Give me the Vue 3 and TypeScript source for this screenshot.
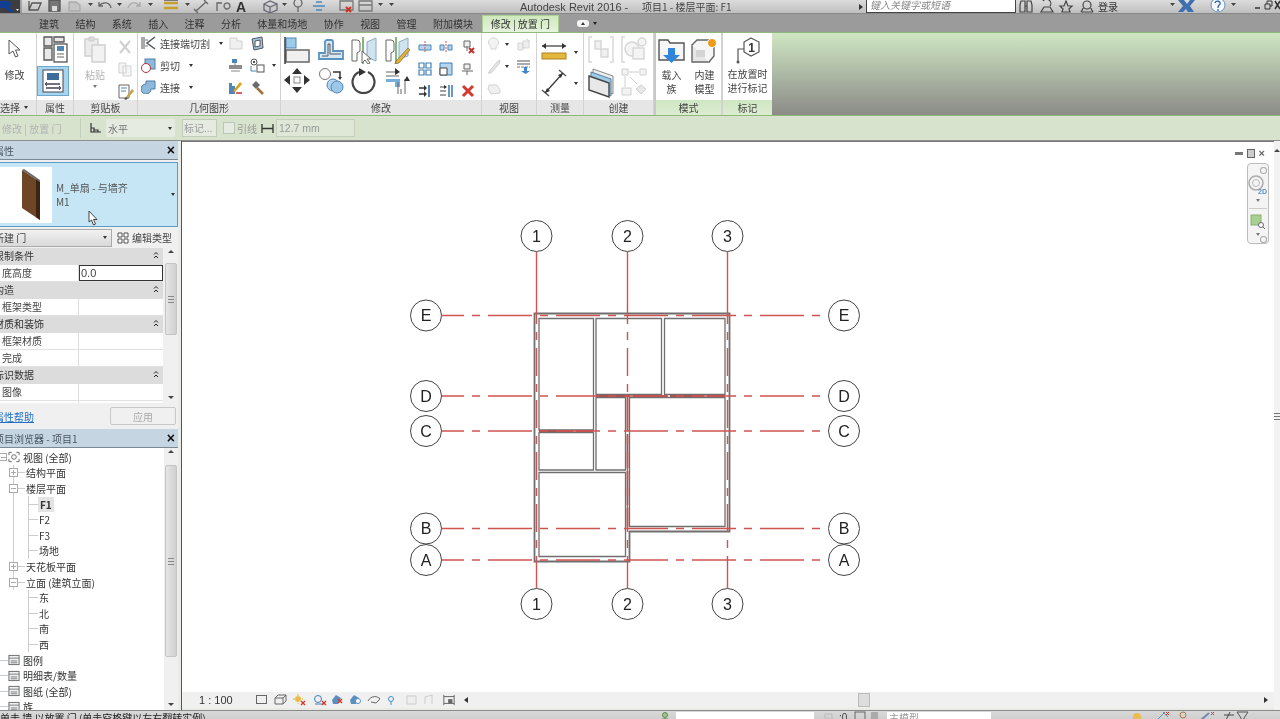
<script setup lang="ts">
// Revit 2016 main window, floor plan F1 with the "place door" contextual tab open
interface TreeRow {
  text: string
  depth: 0 | 1 | 2
  exp?: '+' | '-'
  guide?: string
  selected?: boolean
}

const tabs = ['建筑', '结构', '系统', '插入', '注释', '分析', '体量和场地', '协作', '视图', '管理', '附加模块']

const propRows = [
  { label: '限制条件', head: true },
  { label: '底高度', value: '0.0' },
  { label: '构造', head: true },
  { label: '框架类型' },
  { label: '材质和装饰', head: true },
  { label: '框架材质' },
  { label: '完成' },
  { label: '标识数据', head: true },
  { label: '图像' },
  { label: '' },
]

const tree: TreeRow[] = [
  { text: '视图 (全部)', depth: 0, exp: '-' },
  { text: '结构平面', depth: 1, exp: '+', guide: 'g1' },
  { text: '楼层平面', depth: 1, exp: '-', guide: 'g1' },
  { text: 'F1', depth: 2, guide: 'g1 g2', selected: true },
  { text: 'F2', depth: 2, guide: 'g1 g2' },
  { text: 'F3', depth: 2, guide: 'g1 g2' },
  { text: '场地', depth: 2, guide: 'g1 g2' },
  { text: '天花板平面', depth: 1, exp: '+', guide: 'g1' },
  { text: '立面 (建筑立面)', depth: 1, exp: '-', guide: 'g1' },
  { text: '东', depth: 2, guide: 'g2' },
  { text: '北', depth: 2, guide: 'g2' },
  { text: '南', depth: 2, guide: 'g2' },
  { text: '西', depth: 2, guide: 'g2' },
  { text: '图例', depth: 0 },
  { text: '明细表/数量', depth: 0 },
  { text: '图纸 (全部)', depth: 0 },
  { text: '族', depth: 0 },
]

const gridV = [
  { x: 536.5, label: '1' },
  { x: 627.5, label: '2' },
  { x: 727.5, label: '3' },
]
const gridH = [
  { y: 315.5, label: 'E' },
  { y: 396, label: 'D' },
  { y: 431, label: 'C' },
  { y: 528.5, label: 'B' },
  { y: 560, label: 'A' },
]
const rooms = [
  '539,318.5 593.5,318.5 593.5,430 539,430',
  '539,432.5 593.5,432.5 593.5,470 539,470',
  '596,318.5 661.5,318.5 661.5,394.5 596,394.5',
  '664.5,318.5 725,318.5 725,394.5 664.5,394.5',
  '596,397.5 625.5,397.5 625.5,470 596,470',
  '629.5,397.5 725,397.5 725,526.5 629.5,526.5',
  '539,472.5 625.5,472.5 625.5,526.5 625.5,556.5 539,556.5',
]
</script>

<template>
  <div class="app">
    <!-- title bar -->
    <header class="titlebar">
      <svg class="qat" width="400" height="13" viewBox="0 0 400 13">
        <rect x="0" y="0" width="20" height="13" fill="#3d3d3f" />
        <path d="M0 1H9L12 4 9 7 14 12H9L5 8H0Z" fill="#123f94" />
        <path d="M16 9l3 0-1.500 2z" fill="#eee" />
        <path d="M21 0V13" stroke="#777" />
        <g fill="none" stroke="#555" stroke-width="1.300">
          <path d="M29 1V10H38L41 3H32L29 10" />
          <path d="M49 0H60V11H49Z" fill="#777" />
          <path d="M52 6H57V11H52Z" fill="#ddd" stroke="none" />
          <path d="M69 2H76L80 5V11H69Z" fill="#c4c4c4" stroke="#aaa" />
          <path d="M99 6C103 1 110 2 111 8M99 2V6H103" stroke="#666" />
          <path d="M140 6C136 1 130 2 128 8M140 2V6H136" stroke="#aaa" />
          <path d="M164 3H178M164 8H178" stroke="#c89e2c" stroke-width="2.500" />
          <path d="M164 0H178" stroke="#444" />
          <path d="M196 11L206 2M194 9l4 4M204 0l4 4" stroke="#666" />
          <path d="M217 11L217 3H222M224 6A3 3 0 1 0 224 5.900" stroke="#666" />
          <path d="M264 4L270 1L277 4V10L270 13L264 10ZM264 4L270 7L277 4M270 7V13" stroke="#667" />
          <path d="M294 3A4 4 0 1 0 302 3A4 4 0 1 0 294 3M298 7V12" stroke="#666" />
          <path d="M313 6H325M316 2H322M316 10H322" stroke="#4b87b8" />
          <path d="M340 1H353V10H340Z" stroke="#777" />
          <path d="M359 1H372V11H359ZM359 5H372" stroke="#777" />
        </g>
        <path d="M346 7l5 5M351 7l-5 5" stroke="#d03020" stroke-width="2" />
        <g fill="#444">
          <path d="M88 3h5l-2.500 3zM117 3h5l-2.500 3zM148 3h5l-2.500 3zM185 3h5l-2.500 3zM282 3h5l-2.500 3zM378 3h5l-2.500 3zM389 3h5l-2.500 3z" />
        </g>
        <text x="236" y="12" class="qat-a">A</text>
      </svg>
      <span class="title-text">Autodesk Revit 2016 -</span>
      <span class="title-doc">项目1 - 楼层平面: F1</span>
      <i class="tri-r"></i>
      <div class="search">键入关键字或短语</div>
      <svg class="title-tools" width="245" height="13" viewBox="0 0 245 13">
        <g fill="none" stroke="#444" stroke-width="1.200">
          <path d="M4 1H8V12H3V5ZM10 1H14L15 5V12H10ZM8 6H10" />
          <path d="M26 1A4 4 0 0 1 33 6M24 12H36L33 7H27Z" />
          <path d="M49 1L51 6H55L52 9L53 12H45L46 9L43 6H47Z" />
          <path d="M66 5A4 4 0 1 0 74 5A4 4 0 1 0 66 5M64 12C66 9 66 9 66 8M76 12C74 9 74 9 74 8M64 12H76" />
        </g>
        <path d="M161 0H167L170 4L173 0H178L173 6L177 12H171L169 9L166 12H161L166 6Z" fill="#3f6fae" />
        <circle cx="201" cy="5" r="7" fill="#f4f8fc" stroke="#6c8fbb" />
        <path d="M198 3C199 0 204 1 203 4C202 6 201 5 201 8M201 9V11" fill="none" stroke="#2e5fa8" stroke-width="1.300" />
        <path d="M153 3h5l-2.500 3zM214 3h5l-2.500 3z" fill="#444" />
        <path d="M238 8H243" stroke="#333" stroke-width="1.500" />
      </svg>
      <span class="login">登录</span>
      <svg class="win-btns" width="18" height="13" viewBox="0 0 18 13">
        <path d="M3 4H8V9H3ZM5 4V1H10V6H8" fill="none" stroke="#333" />
        <path d="M13 1L18 9M18 1L13 9" stroke="#333" stroke-width="1.500" />
      </svg>
    </header>

    <!-- ribbon tabs -->
    <nav class="tabbar">
      <span v-for="t in tabs" :key="t" class="tab">{{ t }}</span>
      <span class="tab-active">修改 | 放置 门</span>
      <span class="tab-pill"><i></i></span>
      <i class="caret tab-caret"></i>
    </nav>

    <!-- ribbon -->
    <section class="ribbon">
      <div class="panel p-select">
        <div class="panel-body stack">
          <svg width="16" height="20" viewBox="0 0 16 20">
            <path d="M2 1V15L6 12L8.500 18L11 17L8.500 11H13Z" fill="#fff" stroke="#555" />
          </svg>
          <span class="big-label">修改</span>
        </div>
        <div class="panel-label">选择 <i class="caret"></i></div>
      </div>

      <div class="panel p-props">
        <div class="panel-body stack">
          <svg width="26" height="27" viewBox="0 0 26 27">
            <g fill="#e8e8e8" stroke="#555" stroke-width="1.300">
              <path d="M2 1H10V10H2ZM2 12H10V24H2ZM12 1H22V6H12Z" />
              <rect x="12" y="8" width="13" height="18" fill="#fff" />
            </g>
            <rect x="15" y="10" width="7" height="5" fill="#4f86b5" />
            <path d="M15 18H22M15 21H22" stroke="#666" />
          </svg>
          <button class="prop-toggle">
            <svg width="24" height="24" viewBox="0 0 24 24">
              <rect x="2" y="1" width="20" height="22" fill="#fff" stroke="#445" />
              <rect x="6" y="4" width="12" height="7" fill="#3e6d9b" />
              <path d="M5 15H19M5 19H19" stroke="#445" stroke-width="1.400" />
              <path d="M6 13l-2 2 2 2M18 17l2 2-2 2" fill="none" stroke="#445" />
            </svg>
          </button>
        </div>
        <div class="panel-label">属性</div>
      </div>

      <div class="panel p-clip">
        <div class="panel-body clip-body">
          <div class="stack">
            <svg width="24" height="27" viewBox="0 0 24 27">
              <path d="M2 3H15V20H2Z" fill="#ececec" stroke="#d0d0d0" stroke-width="1.500" />
              <path d="M6 1H11V5H6Z" fill="#ddd" stroke="#ccc" />
              <path d="M9 9H22V26H9Z" fill="#f2f2f2" stroke="#cfcfcf" stroke-width="1.500" />
            </svg>
            <span class="big-label off">粘贴</span>
            <i class="caret off-caret"></i>
          </div>
          <div class="clip-col">
            <svg width="14" height="15" viewBox="0 0 14 15">
              <path d="M2 1L12 13M12 1L2 13" stroke="#cfcfcf" stroke-width="2" />
            </svg>
            <svg width="14" height="15" viewBox="0 0 14 15">
              <path d="M1 1H8V11H1ZM5 4H13V14H5Z" fill="#f4f4f4" stroke="#d2d2d2" />
            </svg>
            <svg width="16" height="16" viewBox="0 0 16 16">
              <path d="M1 1H11V14H1Z" fill="#fff" stroke="#666" />
              <path d="M3 4H9M3 7H8" stroke="#4f86b5" />
              <path d="M8 13L14 5L16 7L10 14Z" fill="#c8a14b" />
              <path d="M6 15L8 13L10 14L8 16Z" fill="#555" />
            </svg>
          </div>
        </div>
        <div class="panel-label">剪贴板</div>
      </div>

      <div class="panel p-geom">
        <div class="panel-body geom-grid">
          <div class="cmd">
            <svg width="15" height="14" viewBox="0 0 15 14">
              <path d="M1 1V13M3 1V13" stroke="#555" />
              <path d="M14 1L6 7L14 13" fill="none" stroke="#555" stroke-width="1.500" />
              <path d="M7 4H4M7 10H4" stroke="#4f86b5" />
            </svg>
            <span>连接端切割</span><i class="caret"></i>
          </div>
          <svg width="15" height="13" viewBox="0 0 15 13"><path d="M2 1H9V4H14V12H2Z" fill="#f0f0f0" stroke="#cfcfcf" /></svg>
          <svg width="15" height="15" viewBox="0 0 15 15">
            <path d="M2 3L12 1L13 12L4 14Z" fill="#9fc5e2" stroke="#555" />
            <path d="M5 5L10 4V10L5 11Z" fill="#fff" stroke="#555" />
          </svg>
          <i></i>
          <div class="cmd">
            <svg width="15" height="15" viewBox="0 0 15 15">
              <rect x="4" y="1" width="10" height="10" fill="#8db9dc" stroke="#4f7da3" />
              <circle cx="5" cy="10" r="4.500" fill="#fff" stroke="#a33" />
            </svg>
            <span>剪切</span><i class="caret"></i>
          </div>
          <svg width="15" height="14" viewBox="0 0 15 14">
            <path d="M4 1H9V5H4Z" fill="#4f86b5" /><path d="M1 7H14V11H1Z" fill="#8c8c8c" /><path d="M7 5V7M3 13H12" stroke="#888" />
          </svg>
          <svg width="15" height="15" viewBox="0 0 15 15" fill="none" stroke="#555">
            <circle cx="4" cy="4" r="3" /><path d="M3 3l2 2M5 3l-2 2" />
            <rect x="7" y="7" width="7" height="7" />
            <path d="M1 8V13H6" stroke="#4f86b5" />
          </svg>
          <i class="caret"></i>
          <div class="cmd">
            <svg width="15" height="14" viewBox="0 0 15 14">
              <path d="M5 1H14V9H10A5 5 0 1 1 5 4Z" fill="#8db9dc" stroke="#4f7da3" />
            </svg>
            <span>连接</span><i class="caret"></i>
          </div>
          <svg width="15" height="15" viewBox="0 0 15 15">
            <path d="M1 14V3H4V6H7V14Z" fill="#4f86b5" />
            <path d="M5 11L12 2L14 4L7 12Z" fill="#d8a21f" />
            <path d="M8 13H14" stroke="#c33" stroke-width="1.500" />
          </svg>
          <svg width="15" height="15" viewBox="0 0 15 15">
            <path d="M2 5L6 1L10 5L6 9Z" fill="#6b6b6b" /><path d="M7 8L13 14" stroke="#a0703c" stroke-width="2.500" />
          </svg>
          <i></i>
        </div>
        <div class="panel-label">几何图形</div>
      </div>

      <div class="panel p-modify">
        <div class="panel-body modify-body">
          <div class="big-grid">
            <svg width="26" height="27" viewBox="0 0 26 27">
              <rect x="2" y="1" width="10" height="10" fill="#9ccbe8" stroke="#4f86b5" />
              <rect x="2" y="13" width="23" height="12" fill="#f0f0f0" stroke="#666" stroke-width="1.500" />
              <path d="M1 0V27" stroke="#444" stroke-width="1.600" />
            </svg>
            <svg width="26" height="27" viewBox="0 0 26 27" fill="none">
              <path d="M1 22V16H7V5A2 2 0 0 1 9 3H13A2 2 0 0 1 15 5V14H25V22Z" stroke="#5a93c0" stroke-width="1.800" fill="#d7e9f5" />
              <path d="M4 19H10V7H12V17H23" stroke="#555" />
            </svg>
            <svg width="26" height="27" viewBox="0 0 26 27">
              <path d="M1 3H6A3 3 0 0 1 9 6V14L6 16V24H1Z" fill="#fff" stroke="#666" />
              <path d="M16 5L25 1V24L16 20Z" fill="#cfe3f1" stroke="#88a9c2" />
              <path d="M12 0V27" stroke="#59a14f" stroke-width="1.500" />
              <path d="M11 14V26L14 23L17 27L19 26L16 22H20Z" fill="#fff" stroke="#666" />
            </svg>
            <svg width="26" height="27" viewBox="0 0 26 27">
              <path d="M1 3H6A3 3 0 0 1 9 6V14L6 16V24H1Z" fill="#fff" stroke="#666" />
              <path d="M14 5L23 1V19L14 22Z" fill="#cfe3f1" stroke="#88a9c2" />
              <path d="M11 0V27" stroke="#59a14f" stroke-width="1.500" />
              <path d="M11 24L23 11L25 13L14 26L10 27Z" fill="#e6b22e" stroke="#555" stroke-width=".6" />
            </svg>
            <svg width="26" height="27" viewBox="0 0 26 27">
              <rect x="10" y="10" width="6" height="6" fill="#fff" stroke="#888" />
              <path d="M13 1L18 7H8ZM13 26L18 20H8ZM0 13L6 8V18ZM26 13L20 8V18Z" fill="#333" />
            </svg>
            <svg width="26" height="27" viewBox="0 0 26 27">
              <circle cx="7" cy="7" r="5.500" fill="#fff" stroke="#777" />
              <path d="M15 5H22V11" fill="none" stroke="#333" stroke-width="1.500" />
              <path d="M20 10l2 3 2-3z" fill="#333" />
              <circle cx="15" cy="18" r="6" fill="#b5d5ee" stroke="#4f86b5" />
              <circle cx="19" cy="20" r="6" fill="#9cc7e6" stroke="#4f86b5" />
            </svg>
            <svg width="26" height="27" viewBox="0 0 26 27">
              <path d="M8 5A11 11 0 1 0 17 5" fill="none" stroke="#444" stroke-width="2.200" />
              <path d="M8 1L15 5L8 9Z" fill="#333" />
            </svg>
            <svg width="26" height="27" viewBox="0 0 26 27">
              <path d="M1 5H14M1 9H14" stroke="#666" />
              <path d="M10 1L15 5L10 8Z" fill="#333" />
              <path d="M1 12H15V20H10V15H1Z" fill="#78aeda" />
              <path d="M16 22V27M20 12V27M13 15V27" stroke="#666" />
              <path d="M22 9L25 14H19Z" fill="#333" />
            </svg>
          </div>
          <div class="small-grid">
            <svg width="14" height="14" viewBox="0 0 14 14">
              <path d="M1 5H13V10H1Z" fill="#b5d5ee" stroke="#4f86b5" /><path d="M7 1V13" stroke="#c55" stroke-dasharray="2 1" />
            </svg>
            <svg width="14" height="14" viewBox="0 0 14 14">
              <path d="M1 5H5V10H1ZM9 5H13V10H9Z" fill="#b5d5ee" stroke="#4f86b5" /><path d="M7 1V13" stroke="#c55" stroke-dasharray="2 1" />
            </svg>
            <svg width="14" height="14" viewBox="0 0 14 14">
              <path d="M3 1H9V7H3ZM6 7V11" fill="#eee" stroke="#666" /><path d="M8 8L13 13M13 8L8 13" stroke="#c9302c" stroke-width="2" />
            </svg>
            <svg width="14" height="14" viewBox="0 0 14 14" fill="none" stroke="#3f7fb5" stroke-width="1.200">
              <path d="M1 1H6V6H1ZM8 1H13V6H8ZM1 8H6V13H1ZM8 8H13V13H8Z" />
            </svg>
            <svg width="14" height="14" viewBox="0 0 14 14">
              <path d="M1 1H13V13H1Z" fill="#b5d5ee" stroke="#3f7fb5" /><path d="M1 6H8V13H1Z" fill="#fff" stroke="#444" />
            </svg>
            <svg width="14" height="14" viewBox="0 0 14 14">
              <path d="M3 2H9V7H3ZM1 9H12M6 9V13" fill="#eee" stroke="#666" />
            </svg>
            <svg width="14" height="14" viewBox="0 0 14 14">
              <path d="M1 4H8M1 10H8" stroke="#333" stroke-width="1.400" /><path d="M6 1L9 4L6 7ZM6 7L9 10L6 13Z" fill="#333" /><path d="M11 1V13" stroke="#4f86b5" stroke-width="2" />
            </svg>
            <svg width="14" height="14" viewBox="0 0 14 14">
              <path d="M1 3H7M1 7H7M1 11H7" stroke="#444" /><path d="M5 1L8 3L5 5Z" fill="#333" /><path d="M10 1V13M13 1V13" stroke="#4f86b5" stroke-width="1.700" />
            </svg>
            <svg width="14" height="14" viewBox="0 0 14 14">
              <path d="M2 2L12 12M12 2L2 12" stroke="#d3392e" stroke-width="3" />
            </svg>
          </div>
        </div>
        <div class="panel-label">修改</div>
      </div>

      <div class="panel p-view">
        <div class="panel-body view-grid">
          <svg width="13" height="15" viewBox="0 0 13 15">
            <path d="M6.500 1A4.500 4.500 0 0 1 9 9.500V12H4V9.500A4.500 4.500 0 0 1 6.500 1Z" fill="#f3f3f3" stroke="#d4d4d4" />
          </svg>
          <i class="caret"></i>
          <svg width="15" height="13" viewBox="0 0 15 13"><path d="M2 5H7V12H2ZM7 3H13V10H7ZM10 1L14 3" fill="#eee" stroke="#d4d4d4" /></svg>
          <svg width="14" height="15" viewBox="0 0 14 15"><path d="M1 14L10 3L13 1L12 5L4 14Z" fill="#e4e4e4" stroke="#d0d0d0" /></svg>
          <i class="caret"></i>
          <svg width="15" height="15" viewBox="0 0 15 15">
            <path d="M1 2H14M1 5H14" stroke="#555" />
            <path d="M1 8H14" stroke="#777" stroke-dasharray="3 1" />
            <path d="M8 8V12H5L9.500 15L14 12H11V8Z" fill="#3f86d0" />
          </svg>
          <svg width="14" height="15" viewBox="0 0 14 15"><path d="M2 4H10L13 9V12L4 13L1 8Z" fill="#f0f0f0" stroke="#d4d4d4" /></svg>
        </div>
        <div class="panel-label">视图</div>
      </div>

      <div class="panel p-measure">
        <div class="panel-body measure-grid">
          <svg width="26" height="20" viewBox="0 0 26 20">
            <path d="M1 4H25" stroke="#333" stroke-width="1.200" />
            <path d="M1 4L5 1V7ZM25 4L21 1V7Z" fill="#333" />
            <rect x="1" y="11" width="24" height="6" fill="#e5b73b" stroke="#a98420" />
          </svg>
          <i class="caret"></i>
          <svg width="26" height="28" viewBox="0 0 26 28">
            <path d="M4 24L22 4" stroke="#333" stroke-width="1.200" />
            <path d="M1 21L8 27M18 1L25 7" stroke="#555" stroke-width="1.500" />
            <path d="M4 24L6 19L9 22ZM22 4L20 9L17 6Z" fill="#333" />
          </svg>
          <i class="caret"></i>
        </div>
        <div class="panel-label">测量</div>
      </div>

      <div class="panel p-create">
        <div class="panel-body create-grid">
          <svg width="26" height="27" viewBox="0 0 26 27" fill="#f0f0f0" stroke="#d6d6d6" stroke-width="1.400">
            <path d="M4 1H1V26H4M22 1H25V26H22" fill="none" />
            <path d="M7 5H13V13H7ZM13 13H20V21H13Z" />
          </svg>
          <svg width="26" height="27" viewBox="0 0 26 27" fill="#f4f4f4" stroke="#d6d6d6" stroke-width="1.400">
            <path d="M4 1H1V26H4" fill="none" />
            <circle cx="11" cy="13" r="7" /><rect x="12" y="12" width="11" height="11" /><circle cx="21" cy="6" r="4" />
          </svg>
          <svg width="26" height="30" viewBox="0 0 26 30">
            <path d="M5 1L25 8V26L5 19Z" fill="#e9eef2" stroke="#888" />
            <path d="M3 4L23 11V28L3 21Z" fill="#9ccbe8" stroke="#5d7e98" />
            <path d="M1 8L21 15V29L1 22Z" fill="#e8e8e8" stroke="#444" stroke-width="1.400" />
          </svg>
          <svg width="26" height="28" viewBox="0 0 26 28" fill="none" stroke="#d0d0d0">
            <path d="M1 1H7V7H1ZM19 1H25V7H19ZM1 20H10V27H1Z" fill="#f3f3f3" />
            <path d="M20 17L25 21L20 26L15 21Z" fill="#e8e8e8" />
            <path d="M8 4H18M4 8V19M9 9L16 16" />
          </svg>
        </div>
        <div class="panel-label">创建</div>
      </div>

      <div class="panel p-mode">
        <div class="panel-body mode-grid">
          <div class="stack">
            <svg width="27" height="27" viewBox="0 0 27 27">
              <path d="M1 23V3H10L12 6H26V23Z" fill="#f6f6f6" stroke="#555" stroke-width="1.400" />
              <path d="M10 11H17V18H22L13.500 26L5 18H10Z" fill="#2f86da" />
            </svg>
            <span class="big-label two">载入<br />族</span>
          </div>
          <div class="stack">
            <svg width="27" height="27" viewBox="0 0 27 27">
              <path d="M1 8H18V25H1Z" fill="#e6e6e6" stroke="#666" stroke-width="1.400" />
              <path d="M1 8L6 3H23V19L18 25" fill="#f6f6f6" stroke="#666" stroke-width="1.400" />
              <path d="M5 13H14V20H5Z" fill="#d4d4d4" />
              <circle cx="21" cy="6" r="4.500" fill="#ee9b1c" stroke="#fff" />
            </svg>
            <span class="big-label two">内建<br />模型</span>
          </div>
        </div>
        <div class="panel-label green">模式</div>
      </div>

      <div class="panel p-tag">
        <div class="panel-body stack">
          <svg width="26" height="27" viewBox="0 0 26 27">
            <path d="M15 1L23 5V15L15 19L8 15V5Z" fill="#fff" stroke="#555" stroke-width="1.200" />
            <text x="15.500" y="15" class="tag-num">1</text>
            <path d="M8 12H2V24" fill="none" stroke="#555" stroke-width="1.200" />
            <circle cx="2" cy="25" r="1.500" fill="#555" />
          </svg>
          <span class="big-label two">在放置时<br />进行标记</span>
        </div>
        <div class="panel-label green">标记</div>
      </div>
    </section>

    <!-- options bar -->
    <section class="options">
      <span class="opt-context">修改 | 放置 门</span>
      <i class="opt-sep"></i>
      <svg width="12" height="12" viewBox="0 0 12 12">
        <path d="M1 1V10H11M1 6H4V10M4 8H8V10" fill="none" stroke="#333" stroke-width="1.200" />
      </svg>
      <div class="opt-select">水平<i class="caret"></i></div>
      <div class="opt-tag">标记...</div>
      <span class="opt-check"></span>
      <span class="opt-leader">引线</span>
      <svg width="13" height="11" viewBox="0 0 13 11"><path d="M1 1V10M12 1V10M1 5.500H12" stroke="#333" stroke-width="1.300" /></svg>
      <div class="opt-input">12.7 mm</div>
    </section>

    <!-- workspace -->
    <main class="workspace">
      <aside class="side">
        <section class="props">
          <header class="dock-head"><span class="shift">属性</span><b>×</b></header>
          <div class="type-sel">
            <div class="thumb">
              <svg width="20" height="52" viewBox="0 0 20 52">
                <path d="M1 1L19 13V51L1 39Z" fill="#6e4526" />
                <path d="M15 10L19 13V51L15 48Z" fill="#3b2413" />
                <path d="M1 1L3 0L19 11V13Z" fill="#666" />
              </svg>
            </div>
            <div class="type-text">
              <div>M_单扇 - 与墙齐</div>
              <div>M1</div>
            </div>
            <i class="caret type-caret"></i>
            <svg class="cursor" width="11" height="16" viewBox="0 0 11 16">
              <path d="M1 1V12L3.500 10L5.500 15L7.500 14L5.500 9.500H9Z" fill="#fff" stroke="#444" />
            </svg>
          </div>
          <div class="inst-row">
            <div class="inst-select"><span class="shift">新建 门</span><i class="caret"></i></div>
            <svg width="12" height="12" viewBox="0 0 12 12" fill="#fff" stroke="#555">
              <path d="M1 1H5V5H1ZM7 1H11V5H7ZM1 7H5V11H1ZM7 7H11V11H7Z" />
            </svg>
            <span>编辑类型</span>
          </div>
          <div class="prop-area">
            <div class="prop-table">
              <div v-for="row in propRows" :key="row.label" class="prop-row" :class="{ head: row.head }">
                <template v-if="row.head">
                  <span class="shift">{{ row.label }}</span>
                  <svg class="chev" width="6" height="8" viewBox="0 0 6 8">
                    <path d="M1 3.500L3 1.500L5 3.500M1 7L3 5L5 7" fill="none" stroke="#222" />
                  </svg>
                </template>
                <template v-else>
                  <span class="prop-name">{{ row.label }}</span>
                  <span class="prop-val" :class="{ editing: row.value }">{{ row.value }}</span>
                </template>
              </div>
            </div>
            <div class="vscroll prop-scroll">
              <i class="arrow-up"></i>
              <div class="thumb-v"><em></em></div>
              <i class="arrow-down"></i>
            </div>
          </div>
          <div class="prop-foot">
            <a class="help shift">属性帮助</a>
            <button class="apply">应用</button>
          </div>
        </section>

        <section class="browser">
          <header class="dock-head"><span class="shift">项目浏览器 - 项目1</span><b>×</b></header>
          <div class="tree-area">
            <div class="tree">
              <div
                v-for="row in tree"
                :key="row.text"
                class="tree-row"
                :class="[`d${row.depth}`, row.guide]"
              >
                <i v-if="row.exp" class="exp" :class="{ plus: row.exp === '+' }"></i>
                <i v-if="row.depth > 0" class="tick" :class="{ long: row.depth === 2 }"></i>
                <i v-if="row.depth === 0 && !row.exp" class="tick0"></i>
                <svg v-if="row.depth === 0" width="12" height="12" viewBox="0 0 13 12">
                  <g v-if="row.exp" fill="none" stroke="#666">
                    <path d="M1 4V1H4M9 1H12V4M12 8V11H9M4 11H1V8" />
                    <circle cx="6.500" cy="6" r="2.500" />
                  </g>
                  <g v-else>
                    <rect x="1" y="1" width="11" height="10" fill="#eef2f5" stroke="#666" />
                    <path d="M1 4H12M3 7H10M3 9H10" stroke="#777" />
                  </g>
                </svg>
                <span :class="{ sel: row.selected }">{{ row.text }}</span>
              </div>
            </div>
            <div class="vscroll tree-scroll">
              <i class="arrow-up"></i>
              <div class="thumb-v"><em></em></div>
              <i class="arrow-down"></i>
            </div>
          </div>
        </section>
      </aside>

      <div class="view">
        <div class="canvas">
          <svg class="plan" width="1098" height="550" viewBox="182 142 1098 550">
            <polygon
              points="534.500,313.500 729.500,313.500 729.500,531.500 629.500,531.500 629.500,561.500 534.500,561.500"
              fill="#fff"
              stroke="#6f6f6f"
              stroke-width="1.800"
            />
            <polygon
              v-for="r in rooms"
              :key="r"
              :points="r"
              fill="#fff"
              stroke="#6f6f6f"
              stroke-width="1.300"
            />
            <path d="M596 396H725M627.500 397V527M539 431H593" stroke="#a8524f" stroke-width="1.800" stroke-dasharray="34 3" />

            <g v-for="g in gridV" :key="g.x">
              <path :d="`M${g.x} 252V308`" class="grid-line" />
              <path :d="`M${g.x} 308V566`" class="grid-line dashed" />
              <path :d="`M${g.x} 566V588`" class="grid-line" />
              <circle :cx="g.x" cy="236" r="15.500" class="bubble" />
              <circle :cx="g.x" cy="604" r="15.500" class="bubble" />
              <text :x="g.x" y="241.500" class="bubble-text">{{ g.label }}</text>
              <text :x="g.x" y="609.500" class="bubble-text">{{ g.label }}</text>
            </g>
            <g v-for="g in gridH" :key="g.y">
              <path :d="`M442 ${g.y}H828`" class="grid-line dashed-h" />
              <circle cx="426" :cy="g.y" r="15.500" class="bubble" />
              <circle cx="844" :cy="g.y" r="15.500" class="bubble" />
              <text x="426" :y="g.y + 5.500" class="bubble-text">{{ g.label }}</text>
              <text x="844" :y="g.y + 5.500" class="bubble-text">{{ g.label }}</text>
            </g>
          </svg>

          <div class="view-btns">
            <i class="vb-min"></i>
            <i class="vb-restore"></i>
            <i class="vb-close">×</i>
          </div>
          <div class="navbar">
            <i class="nav-dot"></i>
            <svg width="20" height="22" viewBox="0 0 20 22">
              <circle cx="8" cy="9" r="7" fill="none" stroke="#aaa" stroke-width="1.500" />
              <circle cx="8" cy="9" r="3.500" fill="none" stroke="#bbb" />
              <text x="10" y="20" class="nav-2d">2D</text>
            </svg>
            <i class="caret nav-caret"></i>
            <i class="nav-sep"></i>
            <svg width="16" height="16" viewBox="0 0 16 16">
              <rect x="1" y="1" width="10" height="10" fill="#a8cf91" stroke="#8ab070" />
              <circle cx="11" cy="11" r="2.500" fill="#fff" stroke="#667" />
              <path d="M13 13l2 2" stroke="#667" />
            </svg>
            <i class="caret nav-caret"></i>
            <i class="nav-dot"></i>
          </div>
        </div>
        <div class="vcb">
          <span class="scale">1 : 100</span>
          <svg width="200" height="14" viewBox="0 0 200 14">
            <g fill="none" stroke="#666">
              <rect x="0.500" y="2.500" width="10" height="8" />
              <path d="M19 5L22 2H30V8L27 11H19ZM19 5H27V11M27 5L30 2" />
            </g>
            <g transform="translate(-19 0)">
              <circle cx="61" cy="6" r="3" fill="#f0c14b" />
              <path d="M56 6H66M61 1V11" stroke="#e0b040" stroke-dasharray="2 1" />
              <path d="M64 8l4 4M68 8l-4 4" stroke="#d03a2c" stroke-width="1.400" />
            </g>
            <g transform="translate(-17 0)">
              <circle cx="79" cy="6" r="3.500" fill="none" stroke="#3f7fb5" />
              <path d="M76 11H84" stroke="#3f7fb5" />
              <path d="M83 8l4 4M87 8l-4 4" stroke="#d03a2c" stroke-width="1.400" />
            </g>
            <g transform="translate(-20 0)">
              <path d="M96 7L100 2L105 5L102 11L97 11Z" fill="#5b8fc0" />
              <path d="M102 6l4 4M106 6l-4 4" stroke="#d03a2c" stroke-width="1.400" />
            </g>
            <g transform="translate(-22 0)">
              <path d="M116 7L120 2L125 5L122 11L117 11Z" fill="#5b8fc0" />
              <circle cx="124" cy="8" r="2.500" fill="#fff" stroke="#5b8fc0" />
            </g>
            <path d="M112 8C115 2 122 3 124 6L120 10L115 9" fill="none" stroke="#666" />
            <circle cx="135" cy="6" r="2.500" fill="none" stroke="#3f8fd0" /><path d="M135 9V12" stroke="#3f8fd0" />
            <path d="M151 3H160V11H151Z" fill="#eee" stroke="#ccc" /><path d="M169 11V4L176 2V11" fill="none" stroke="#ccc" />
          </svg>
          <svg class="crop-ic" width="12" height="14" viewBox="0 0 14 14">
            <path d="M1 1V13M13 1V13M1 3H13M1 11H13" stroke="#555" />
            <rect x="6" y="6" width="5" height="5" fill="#666" />
          </svg>
          <i class="arrow-left"></i>
          <div class="hscroll"><em></em></div>
          <i class="arrow-right"></i>
        </div>
      </div>
      <div class="right-scroll"><i class="arrow-up"></i><em></em></div>
    </main>

    <footer class="statusbar">
      <span class="hint">单击 墙 以放置 门 (单击空格键以左右翻转实例)</span>
      <svg class="st-user" width="12" height="9" viewBox="0 0 12 9">
        <circle cx="6" cy="3" r="2.500" fill="#9cc58a" stroke="#5f8d4e" />
        <path d="M1 9C2 6 10 6 11 9" fill="#9cc58a" stroke="#5f8d4e" />
      </svg>
      <div class="st-box wide"></div>
      <svg class="st-mid" width="40" height="9" viewBox="0 0 40 9">
        <path d="M1 2H8V7H1Z" fill="none" stroke="#bbb" />
        <text x="15" y="9" class="st-zero">:0</text>
      </svg>
      <svg class="st-mid2" width="24" height="9" viewBox="0 0 24 9">
        <rect x="1" y="1" width="10" height="8" fill="none" stroke="#666" />
        <rect x="17" y="1" width="7" height="8" fill="#aaa" />
      </svg>
      <div class="st-box model">主模型</div>
      <svg class="st-right" width="118" height="9" viewBox="0 0 118 9">
        <circle cx="6" cy="6" r="4" fill="#e8bd4e" />
        <path d="M26 9L34 1M32 1L37 6" stroke="#6d8db0" />
        <path d="M35 1l3 3M38 1l-3 3M80 1l3 3M83 1l-3 3" stroke="#d03a2c" />
        <circle cx="52" cy="4" r="3" fill="none" stroke="#b07a40" />
        <path d="M70 9L78 2" stroke="#6d8db0" stroke-width="2" />
        <path d="M95 9L99 1M93 4H103" stroke="#444" />
        <path d="M106 1H117L113 7V9H110V7Z" fill="none" stroke="#555" />
      </svg>
    </footer>
  </div>
</template>

<style scoped>
.app {
  position: relative;
  width: 1280px;
  height: 719px;
  overflow: hidden;
  display: flex;
  flex-direction: column;
  background: #e9e9e9;
  color: #333;
  font-family: "Noto Sans CJK SC", "Liberation Sans", sans-serif;
  font-size: 10px;
  filter: blur(0.3px);
}
i { font-style: normal; display: block; }
svg { display: block; flex: none; }

.caret {
  width: 0;
  height: 0;
  border: 2.5px solid transparent;
  border-top: 3px solid #333;
  border-bottom: 0;
  flex: none;
}

/* title bar */
.titlebar {
  height: 13px;
  flex: none;
  display: flex;
  align-items: flex-end;
  background: linear-gradient(#dcdcdc, #bfbfbf);
  overflow: hidden;
}
.qat { margin-right: 120px; }
.qat-a { font: bold 14px "Liberation Sans", sans-serif; fill: #333; }
.title-text {
  width: 122px;
  flex: none;
  color: #444;
  font: 11px/16px "Liberation Sans", sans-serif;
  margin-bottom: -2px;
  white-space: nowrap;
}
.title-doc {
  width: 217px;
  flex: none;
  color: #444;
  font-size: 10px;
  line-height: 16px;
  margin-bottom: -2px;
  white-space: nowrap;
}
.tri-r {
  width: 0;
  height: 0;
  flex: none;
  border: 3px solid transparent;
  border-left: 4px solid #333;
  border-right: 0;
  margin: 0 3px 3px 0;
}
.search {
  width: 150px;
  height: 13px;
  flex: none;
  box-sizing: border-box;
  background: #fff;
  border: 1px solid #444;
  border-top: 0;
  color: #888;
  font-size: 10px;
  font-style: italic;
  line-height: 10px;
  padding-left: 3px;
  overflow: hidden;
}
.title-tools { margin-left: 1px; }
.login {
  flex: none;
  margin-left: -164px;
  width: 164px;
  line-height: 13px;
  color: #333;
  font-size: 10px;
}
.win-btns { margin-left: 0; }

/* tabs */
.tabbar {
  height: 19px;
  flex: none;
  display: flex;
  align-items: center;
  padding-left: 39px;
  gap: 16.4px;
  background: #9b9b9b;
  border-top: 1px solid #888;
  box-sizing: border-box;
}
.tab { color: #333; font-size: 10px; white-space: nowrap; }
.tab-active {
  margin-left: -7.4px;
  align-self: flex-end;
  width: 77px;
  height: 17px;
  box-sizing: border-box;
  text-align: center;
  line-height: 16px;
  background: linear-gradient(#cfe8bd, #e6f3dd);
  border: 1px solid #a9cf95;
  border-bottom: 0;
  color: #333;
  white-space: nowrap;
}
.tab-pill {
  margin-left: 2px;
  width: 12px;
  height: 7px;
  border-radius: 3px;
  background: #f4f4f4;
  display: flex;
  align-items: center;
  justify-content: center;
}
.tab-pill i { border: 2px solid transparent; border-bottom: 3px solid #333; border-top: 0; }
.tab-caret { margin-left: -13px; border-top-color: #222; }

/* ribbon */
.ribbon {
  height: 84px;
  flex: none;
  box-sizing: border-box;
  display: flex;
  border-top: 1px solid #8fb97a;
  border-bottom: 1px solid #8fb97a;
  background: linear-gradient(#cfe6c2, #8b8b87);
}
.panel {
  display: flex;
  flex-direction: column;
  background: #fff;
  box-sizing: border-box;
  border-right: 1px solid #d2d2d2;
}
.panel-body { height: 67px; box-sizing: border-box; flex: none; }
.panel-label {
  height: 15px;
  flex: none;
  background: #e6e6e6;
  text-align: center;
  line-height: 15px;
  color: #444;
  font-size: 10px;
  display: flex;
  align-items: center;
  justify-content: center;
  gap: 4px;
}
.panel-label.green { background: linear-gradient(#cfe6c2, #dcedd2); }
.stack { display: flex; flex-direction: column; align-items: center; }
.big-label { color: #444; font-size: 10px; line-height: 14px; margin-top: 5px; text-align: center; }
.big-label.two { margin-top: 4px; }
.big-label.off { color: #b5b5b5; }
.off-caret { margin-top: 3px; border-top-color: #777; }

.p-select { width: 37px; }
.p-select .panel-body { padding-top: 6px; }
.p-select .panel-body svg { margin-right: 6px; }
.p-select .big-label { margin: 9px 7px 0 0; }
.p-select .panel-label { justify-content: flex-start; }
.p-props { width: 37px; }
.p-props .panel-body { padding-top: 3px; }
.prop-toggle {
  width: 32px;
  height: 30px;
  margin: 3px 4px 0 0;
  padding: 0;
  border: 1px solid #6ca7cf;
  background: #a9d4ee;
  display: flex;
  align-items: center;
  justify-content: center;
}
.p-clip { width: 64px; }
.clip-body { display: flex; padding: 3px 0 0 9px; gap: 11px; }
.clip-col { display: flex; flex-direction: column; gap: 7px; padding-top: 4px; }
.p-geom { width: 143px; }
.geom-grid {
  display: grid;
  grid-template-columns: 87px 22px 22px 8px;
  grid-auto-rows: 22px;
  padding: 0 0 0 3px;
  margin-top: -1px;
  align-items: center;
}
.cmd { display: flex; align-items: center; gap: 4px; white-space: nowrap; color: #444; font-size: 10px; }
.cmd .caret { margin-left: 5px; }
.p-geom .panel-label { margin-top: 1px; }
.p-modify { width: 201px; }
.modify-body { display: flex; padding: 4px 0 0 3px; }
.big-grid {
  display: grid;
  grid-template-columns: repeat(4, 26px);
  grid-auto-rows: 27px;
  column-gap: 7.5px;
  row-gap: 3px;
}
.small-grid {
  display: grid;
  grid-template-columns: repeat(3, 14px);
  grid-auto-rows: 14px;
  column-gap: 7.5px;
  row-gap: 8px;
  margin: 3px 0 0 7px;
}
.p-view { width: 55px; }
.view-grid {
  display: grid;
  grid-template-columns: 18px 11px 18px;
  grid-auto-rows: 22px;
  padding-left: 5px;
  align-items: center;
}
.p-measure { width: 47px; }
.measure-grid {
  display: grid;
  grid-template-columns: 33px 8px;
  grid-template-rows: 30px 32px;
  padding: 4px 0 0 4px;
  align-items: center;
}
.p-create { width: 70px; }
.create-grid {
  display: grid;
  grid-template-columns: 26px 26px;
  column-gap: 7px;
  row-gap: 3px;
  padding: 3px 0 0 4px;
}
.p-mode { width: 68px; margin-left: 0; border-left: 2px solid #c8c8c8; }
.mode-grid { display: flex; padding: 4px 0 0 2px; gap: 6px; }
.p-tag { width: 50px; border-right: 0; border-left: 1px solid #d2d2d2; }
.p-tag .panel-body { padding-top: 4px; }
.p-tag .panel-body svg { margin-left: 2px; }
.p-tag .big-label.two { margin-top: 3px; }
.tag-num { font: bold 12px "Liberation Sans", sans-serif; text-anchor: middle; fill: #333; }

/* options bar */
.options {
  height: 25px;
  flex: none;
  box-sizing: border-box;
  display: flex;
  align-items: center;
  padding-left: 2px;
  background: #d8e3ce;
  border-bottom: 1px solid #8e8e8e;
}
.opt-context { width: 78px; color: #b3b3b3; white-space: nowrap; }
.opt-sep { width: 1px; height: 20px; background: #c4cfbb; margin-right: 9px; }
.opt-select {
  width: 69px;
  height: 18px;
  margin-left: 4px;
  box-sizing: border-box;
  background: #e6ebe1;
  padding-left: 2px;
  line-height: 17px;
  color: #777;
  display: flex;
  justify-content: space-between;
  align-items: center;
  padding-right: 3px;
}
.opt-tag {
  width: 35px;
  height: 18px;
  margin-left: 7px;
  box-sizing: border-box;
  background: #e6ebe1;
  border: 1px solid #c2cbba;
  color: #999;
  line-height: 16px;
  padding-left: 1px;
}
.opt-check {
  width: 10px;
  height: 10px;
  margin-left: 6px;
  background: #e6ebe1;
  border: 1px solid #bcc5b5;
}
.opt-leader { margin: 0 4px 0 2px; color: #999; }
.opt-input {
  width: 79px;
  height: 18px;
  margin-left: 2px;
  box-sizing: border-box;
  background: #dfe7d7;
  border: 1px solid #c6cfbe;
  color: #999;
  font: 10.5px/16px "Liberation Sans", sans-serif;
  padding-left: 2px;
}

/* workspace */
.workspace { flex: 1; min-height: 0; display: flex; background: #e9ebe6; }
.side { width: 178px; flex: none; display: flex; flex-direction: column; background: #f0f0f0; }
.shift { margin-left: -6px; }
.dock-head {
  height: 19px;
  flex: none;
  box-sizing: border-box;
  display: flex;
  justify-content: space-between;
  align-items: center;
  padding-right: 3px;
  background: #c5d6e2;
  border-bottom: 1px solid #7b8a95;
  color: #4a5560;
  font-size: 10px;
}
.dock-head b { color: #111; font: bold 14px/14px "Liberation Sans", sans-serif; }
.props { height: 288px; flex: none; display: flex; flex-direction: column; }
.type-sel {
  position: relative;
  margin-top: 2px;
  height: 65px;
  flex: none;
  box-sizing: border-box;
  display: flex;
  align-items: center;
  background: #c6e6f5;
  border: 1px solid #5d9cc4;
  border-left: 0;
}
.thumb {
  width: 52px;
  height: 56px;
  flex: none;
  background: #fff;
  display: flex;
  align-items: center;
  justify-content: center;
  padding-left: 10px;
  box-sizing: border-box;
}
.type-text { margin-left: 4px; color: #555; line-height: 14px; font-size: 10px; white-space: nowrap; }
.type-caret { position: absolute; right: 2px; top: 30px; }
.cursor { position: absolute; left: 88px; top: 47px; }
.inst-row {
  height: 21px;
  flex: none;
  display: flex;
  align-items: center;
  gap: 3px;
  color: #444;
}
.inst-select {
  width: 112px;
  height: 18px;
  margin-right: 2px;
  box-sizing: border-box;
  border: 1px solid #aaa;
  border-left: 0;
  background: linear-gradient(#f2f2f2, #d9d9d9);
  display: flex;
  justify-content: space-between;
  align-items: center;
  padding-right: 4px;
  white-space: nowrap;
}
.prop-area { height: 155px; flex: none; display: flex; overflow: hidden; }
.prop-table { width: 163px; flex: none; }
.prop-row {
  height: 17px;
  box-sizing: border-box;
  display: flex;
  background: #fff;
  border-bottom: 1px solid #e2e2e2;
  line-height: 16px;
  color: #444;
}
.prop-row.head {
  background: #dcdcdc;
  justify-content: space-between;
  padding-right: 4px;
  border-bottom: 0;
  color: #333;
}
.chev { margin-top: 3px; }
.prop-name { width: 79px; box-sizing: border-box; padding-left: 2px; border-right: 1px solid #ddd; flex: none; }
.prop-val { flex: 1; padding-left: 1px; }
.prop-val.editing {
  margin-top: 0;
  border: 1px solid #333;
  background: #fff;
  font: 11px/14px "Liberation Sans", sans-serif;
  color: #444;
}
.vscroll {
  width: 14px;
  flex: none;
  margin-left: 1px;
  box-sizing: border-box;
  position: relative;
  background: #f0f0f0;
}
.arrow-up, .arrow-down { position: absolute; left: 4px; border: 3px solid transparent; width: 0; height: 0; }
.arrow-up { top: 2px; border-bottom: 3px solid #444; border-top: 0; }
.arrow-down { bottom: 4px; border-top: 3px solid #444; border-bottom: 0; }
.thumb-v {
  position: absolute;
  left: 1px;
  right: 1px;
  border: 1px solid #c4c4c4;
  background: linear-gradient(90deg, #e6e6e6, #cfcfcf);
  display: flex;
  align-items: center;
  justify-content: center;
  border-radius: 2px;
}
.thumb-v em { width: 6px; height: 5px; border-top: 1px solid #888; border-bottom: 1px solid #888; position: relative; }
.thumb-v em::after { content: ""; position: absolute; left: 0; right: 0; top: 2px; height: 1px; background: #888; }
.prop-scroll .thumb-v { top: 15px; height: 70px; }
.tree-scroll .thumb-v { top: 17px; height: 190px; }
.prop-foot { flex: 1; display: flex; justify-content: space-between; align-items: center; padding: 0 2px 0 0; }
.help { color: #1f6fc4; text-decoration: underline; font-size: 10px; }
.apply {
  width: 66px;
  height: 18px;
  padding: 0;
  background: #f0f0f0;
  border: 1px solid #c8c8c8;
  border-radius: 2px;
  color: #aaa;
  font: 10px "Noto Sans CJK SC", sans-serif;
}
.browser { flex: 1; min-height: 0; display: flex; flex-direction: column; }
.tree-area { flex: 1; min-height: 0; display: flex; overflow: hidden; background: #fff; }
.tree { width: 163px; flex: none; padding-top: 1.5px; overflow: hidden; }
.tree-row {
  height: 15.6px;
  display: flex;
  align-items: center;
  color: #333;
  font-size: 10px;
  white-space: nowrap;
  background-repeat: no-repeat;
}
.tree-row.g1 { background-image: linear-gradient(#ccc, #ccc); background-size: 1px 100%; background-position: 13px 0; }
.tree-row.g2 { background-image: linear-gradient(#ccc, #ccc); background-size: 1px 100%; background-position: 28px 0; }
.tree-row.g1.g2 {
  background-image: linear-gradient(#ccc, #ccc), linear-gradient(#ccc, #ccc);
  background-size: 1px 100%, 1px 100%;
  background-position: 13px 0, 28px 0;
}
.tree-row.d0 { padding-left: 0; }
.tree-row.d0 svg { margin-right: 3px; }
.tree-row.d1 { padding-left: 9px; }
.tree-row.d2 { padding-left: 29px; }
.exp {
  width: 7px;
  height: 7px;
  flex: none;
  border: 1px solid #aaa;
  background: linear-gradient(#aaa, #aaa) center / 5px 1px no-repeat #fff;
  box-sizing: content-box;
}
.d0 .exp { width: 6px; height: 6px; margin-right: 0; margin-left: -1px; }
.d0 .exp + svg { margin-left: 1px; }
.exp.plus {
  background:
    linear-gradient(#aaa, #aaa) center / 5px 1px no-repeat,
    linear-gradient(#aaa, #aaa) center / 1px 5px no-repeat,
    #fff;
}
.tick { width: 7px; height: 1px; background: #ccc; flex: none; margin-right: 1px; }
.tick.long { width: 9px; margin-right: 1px; }
.tick0 { width: 8px; height: 1px; background: #ccc; flex: none; }
.d2 .sel { background: #e4e4e4; font-weight: 700; padding: 0 2px; margin-left: -1px; }

/* view */
.view {
  flex: 1;
  min-width: 0;
  margin-left: 3px;
  display: flex;
  flex-direction: column;
  border-left: 1px solid #555;
}
.canvas {
  position: relative;
  height: 551px;
  flex: none;
  background: #fff;
  border-top: 1px solid #777;
  box-sizing: border-box;
}
.grid-line { fill: none; stroke: #cf5350; stroke-width: 1.4; }
.grid-line.dashed { stroke-dasharray: 28 8 8 8; stroke-dashoffset: 12; }
.grid-line.dashed-h { stroke-dasharray: 44 8 8 8; stroke-dashoffset: 22; }
.bubble { fill: #fff; stroke: #444; stroke-width: 1; }
.bubble-text { font: 16px "Liberation Sans", sans-serif; fill: #222; text-anchor: middle; }
.view-btns {
  position: absolute;
  top: 7px;
  right: 15px;
  display: flex;
  align-items: center;
  gap: 4px;
}
.vb-min { width: 8px; height: 3px; background: #777; }
.vb-restore { width: 6px; height: 7px; border: 1px solid #666; background: #ccc; }
.vb-close { font: bold 11px/9px "Liberation Sans", sans-serif; color: #666; }
.navbar {
  position: absolute;
  left: 1065px;
  top: 21px;
  width: 22px;
  height: 81px;
  box-sizing: border-box;
  border: 1px solid #bcbcbc;
  border-radius: 4px;
  display: flex;
  flex-direction: column;
  align-items: center;
  background: #f4f4f4;
  padding-top: 3px;
}
.nav-dot { width: 5px; height: 5px; border-radius: 50%; border: 1px solid #aaa; align-self: flex-end; margin-right: 1px; }
.nav-2d { font: bold 7px "Liberation Sans", sans-serif; fill: #5b8fc0; }
.nav-caret { margin-top: 3px; border-top-color: #777; }
.nav-sep { width: 18px; height: 1px; background: #ccc; margin: 6px 0; }
.vcb {
  position: relative;
  height: 16px;
  flex: none;
  display: flex;
  align-items: center;
  background: #f0f0f0;
}
.scale { width: 74px; padding-left: 17px; box-sizing: border-box; font: 11px "Liberation Sans", sans-serif; color: #333; }
.crop-ic { margin-left: -13px; }
.arrow-left { margin-left: 9px; width: 0; height: 0; border: 3px solid transparent; border-right: 4px solid #333; border-left: 0; }
.hscroll { flex: 1; display: flex; align-items: center; padding-left: 390px; }
.hscroll em {
  width: 12px;
  height: 14px;
  box-sizing: border-box;
  border: 1px solid #bbb;
  background: #ddd;
}
.arrow-right { margin-right: 12px; width: 0; height: 0; border: 3px solid transparent; border-left: 4px solid #333; border-right: 0; }
.right-scroll {
  width: 6px;
  flex: none;
  position: relative;
  background: #f2f2f2;
  margin-left: -6px;
}
.right-scroll .arrow-up { left: 0; top: 8px; }
.right-scroll em {
  position: absolute;
  left: 0;
  right: 0;
  top: 272px;
  height: 8px;
  background: repeating-linear-gradient(#777 0 1px, transparent 1px 3px);
}

/* status bar */
.statusbar {
  height: 9px;
  flex: none;
  box-sizing: border-box;
  display: flex;
  background: linear-gradient(#d9d9d9, #cfcfcf);
  border-top: 1px solid #8a8a8a;
  overflow: hidden;
}
.hint { width: 659px; flex: none; font-size: 10px; line-height: 13px; color: #222; white-space: nowrap; }
.st-user { margin-top: 1px; }
.st-box { background: #fff; height: 10px; box-sizing: border-box; margin: 1px 0 0 5px; color: #999; line-height: 12px; }
.st-box.wide { width: 138px; }
.st-mid { margin: 1px 0 0 10px; }
.st-zero { font: 10px "Liberation Sans", sans-serif; fill: #444; }
.st-mid2 { margin: 0 0 0 -10px; }
.st-box.model { width: 104px; margin-left: 9px; padding-left: 2px; }
.st-right { margin: 0 0 0 140px; }
</style>

<style>
html, body { margin: 0; padding: 0; overflow: hidden; }
</style>
